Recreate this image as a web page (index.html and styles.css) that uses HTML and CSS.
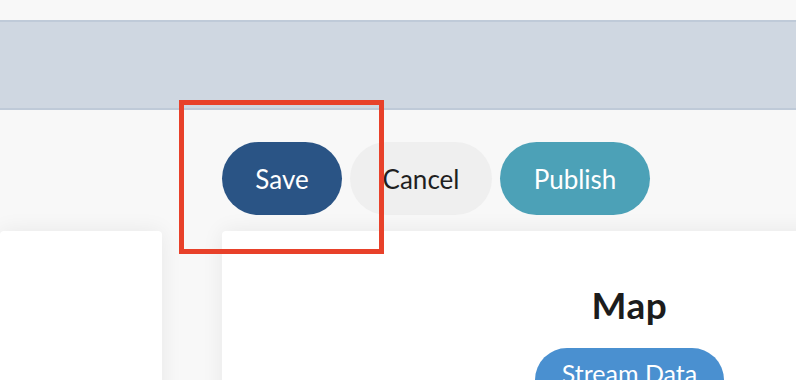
FILE: index.html
```html
<!DOCTYPE html>
<html>
<head>
<meta charset="utf-8">
<link rel="stylesheet" href="styles.css">
</head>
<body>
<div class="topstrip"></div>
<div class="band"></div>
<main class="main">
  <div class="layout">
    <div class="spacer"></div>
    <div class="actions">
      <button class="btn btn-save">Save</button>
      <button class="btn btn-cancel">Cancel</button>
      <button class="btn btn-publish">Publish</button>
    </div>
    <section class="card card-left"></section>
    <section class="card card-right">
      <h2 class="card-title">Map</h2>
      <button class="btn-stream">Stream Data</button>
    </section>
  </div>
  <div class="highlight"></div>
</main>
</body>
</html>
```
FILE: styles.css
```css
* { box-sizing: border-box; }
html, body { margin: 0; padding: 0; }
body {
  width: 796px;
  height: 380px;
  overflow: hidden;
  background: #f8f8f8;
  font-family: "Lato", "Noto Sans", sans-serif;
  position: relative;
}
.topstrip { height: 20px; background: #f8f8f8; }
.band {
  height: 90px;
  background: #cfd7e1;
  border-top: 2px solid #bfcad8;
  border-bottom: 2px solid #bfcad8;
}
.main { position: relative; }
.layout {
  display: grid;
  grid-template-columns: 162px 815px;
  column-gap: 60px;
  row-gap: 16px;
  padding-top: 32px;
}
.actions { display: flex; gap: 8px; }
.btn {
  height: 73px;
  border: none;
  border-radius: 37px;
  padding: 0 30px;
  font-family: inherit;
  font-size: 26px;
  font-weight: 400;
  display: inline-flex;
  align-items: center;
  justify-content: center;
}
.btn-save { background: #2a5485; color: #fff; width: 120px; }
.btn-cancel { background: #efefef; color: #1f1f1f; width: 142px; }
.btn-publish { background: #4ca1b7; color: #fff; width: 150px; }
.card {
  background: #fff;
  border-radius: 4px;
  height: 200px;
  box-shadow: 0 0 22px rgba(0, 0, 0, 0.07);
}
.card-right {
  display: flex;
  flex-direction: column;
  align-items: center;
  padding-top: 53px;
}
.card-title {
  margin: 0;
  font-size: 37px;
  font-weight: 700;
  line-height: 42px;
  letter-spacing: 0.5px;
  color: #1c1c1c;
}
.btn-stream {
  margin-top: 22px;
  width: 189px;
  height: 64px;
  border: none;
  border-radius: 32px;
  background: #4a90d0;
  color: #fff;
  font-family: inherit;
  font-size: 25px;
  padding: 10px 0 0;
  display: flex;
  justify-content: center;
  align-items: flex-start;
}
.highlight {
  position: absolute;
  left: 179px;
  top: -10px;
  width: 205px;
  height: 154px;
  border: 5px solid #e8412a;
}
```
